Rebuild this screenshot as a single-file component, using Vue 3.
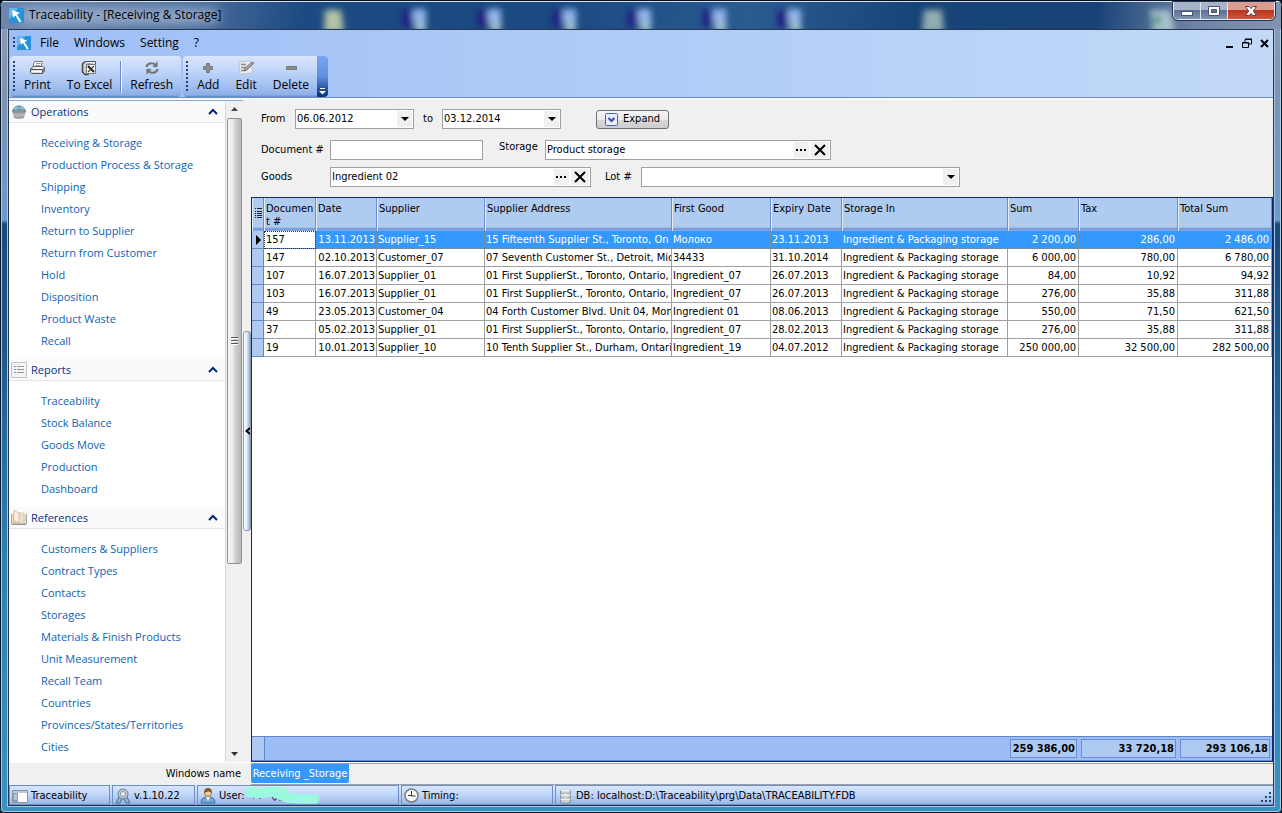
<script setup>
import { ref } from 'vue'

const menus = ['File', 'Windows', 'Setting', '?']

const sections = [
  {
    title: 'Operations',
    icon: 'basket',
    items: ['Receiving & Storage', 'Production Process & Storage', 'Shipping', 'Inventory', 'Return to Supplier', 'Return from Customer', 'Hold', 'Disposition', 'Product Waste', 'Recall'],
  },
  {
    title: 'Reports',
    icon: 'list',
    items: ['Traceability', 'Stock Balance', 'Goods Move', 'Production', 'Dashboard'],
  },
  {
    title: 'References',
    icon: 'book',
    items: ['Customers & Suppliers', 'Contract Types', 'Contacts', 'Storages', 'Materials & Finish Products', 'Unit Measurement', 'Recall Team', 'Countries', 'Provinces/States/Territories', 'Cities'],
  },
]

const headers = ['Documen t #', 'Date', 'Supplier', 'Supplier Address', 'First Good', 'Expiry Date', 'Storage In', 'Sum', 'Tax', 'Total Sum']
const place = 'Ingredient & Packaging storage'
const rows = [
  ['157', '13.11.2013', 'Supplier_15', '15 Fifteenth Supplier St., Toronto, On', 'Молоко', '23.11.2013', place, '2 200,00', '286,00', '2 486,00'],
  ['147', '02.10.2013', 'Customer_07', '07 Seventh Customer St., Detroit, Mic', '34433', '31.10.2014', place, '6 000,00', '780,00', '6 780,00'],
  ['107', '16.07.2013', 'Supplier_01', '01 First SupplierSt., Toronto, Ontario,', 'Ingredient_07', '26.07.2013', place, '84,00', '10,92', '94,92'],
  ['103', '16.07.2013', 'Supplier_01', '01 First SupplierSt., Toronto, Ontario,', 'Ingredient_07', '26.07.2013', place, '276,00', '35,88', '311,88'],
  ['49', '23.05.2013', 'Customer_04', '04 Forth Customer Blvd. Unit 04, Mon', 'Ingredient 01', '08.06.2013', place, '550,00', '71,50', '621,50'],
  ['37', '05.02.2013', 'Supplier_01', '01 First SupplierSt., Toronto, Ontario,', 'Ingredient_07', '28.02.2013', place, '276,00', '35,88', '311,88'],
  ['19', '10.01.2013', 'Supplier_10', '10 Tenth Supplier St., Durham, Ontari', 'Ingredient_19', '04.07.2012', place, '250 000,00', '32 500,00', '282 500,00'],
]

const from = ref('06.06.2012')
const to = ref('03.12.2014')
const doc = ref('')
const storage = ref('Product storage')
const goods = ref('Ingredient 02')
const lot = ref('')
</script>

<template>
  <div class="window">
    <header class="titlebar">
      <svg class="desktop" width="1282" height="28" aria-hidden="true">
        <defs>
          <filter id="soft" x="-50%" y="-50%" width="200%" height="200%"><feGaussianBlur stdDeviation="3" /></filter>
          <filter id="glow" x="-20%" y="-80%" width="140%" height="260%"><feGaussianBlur stdDeviation="6" /></filter>
        </defs>
        <rect x="20" y="8" width="200" height="14" rx="7" fill="#c3d2e4" opacity=".62" filter="url(#glow)" />
        <g filter="url(#soft)">
          <path d="M325 9h16l3 22h-20z" fill="#b4c3a6" />
          <g v-for="x in [402, 477, 552, 627, 702, 777]" :key="x">
            <rect :x="x" y="9" width="11" height="17" fill="#202284" />
            <rect :x="x + 11" y="8" width="13" height="13" fill="#92b4ec" />
            <rect :x="x + 13" y="20" width="11" height="11" fill="#9fbfd0" />
          </g>
          <path d="M924 9h18l2 22h-22z" fill="#93adb0" />
          <path d="M1150 9h20l5 22h-22z" fill="#a9c3cf" />
          <circle cx="1157" cy="19" r="5" fill="#5d9d8b" />
        </g>
      </svg>
      <svg class="app-icon" width="15" height="15" viewBox="0 0 15 15" aria-hidden="true">
        <rect width="15" height="15" fill="#2492dc" /><path d="M0 0h9L0 12z" fill="#7cc8f4" opacity=".7" />
        <path d="M3 2l8 3-3 1.500 4.500 7-2 1-4-7L4 9.500z" fill="#fff" />
      </svg>
      <h1>Traceability - [Receiving &amp; Storage]</h1>
      <div class="caption">
        <button type="button" aria-label="Minimize"><svg width="14" height="14"><rect x="1.500" y="7.500" width="11" height="4" fill="#fff" stroke="#4b5470" /></svg></button>
        <button type="button" aria-label="Maximize"><svg width="14" height="14"><path d="M1.500 2.500h11v9h-11z" fill="#fff" stroke="#4b5470" /><path d="M4.500 5.500h5v3h-5z" fill="#63749a" stroke="#4b5470" /></svg></button>
        <button type="button" class="close" aria-label="Close"><svg width="14" height="14"><path d="M1.500 2.500h3.500L7 4.500l2-2h3.500L9.300 7l3.200 4.500H9l-2-2-2 2H1.500L4.700 7z" fill="#fff" stroke="#5c4048" /></svg></button>
      </div>
    </header>

    <div class="client">
      <div class="menubar">
        <i class="grip short"></i>
        <svg width="14" height="14" viewBox="0 0 15 15" aria-hidden="true">
          <rect width="15" height="15" fill="#2492dc" /><path d="M0 0h9L0 12z" fill="#7cc8f4" opacity=".7" />
          <path d="M3 2l8 3-3 1.500 4.500 7-2 1-4-7L4 9.500z" fill="#fff" />
        </svg>
        <nav><button v-for="m in menus" :key="m" type="button">{{ m }}</button></nav>
        <div class="mdi">
          <button type="button" aria-label="Minimize document"><svg width="9" height="9"><path d="M1 7h7v2H1z" /></svg></button>
          <button type="button" aria-label="Restore document"><svg width="10" height="10" fill="none" stroke="#000"><path d="M3 4V1.500h6.500V6H7M3 1h7M.500 4.500h6v5h-6zM0 5h7" /></svg></button>
          <button type="button" aria-label="Close document"><svg width="9" height="9" stroke="#000" stroke-width="2"><path d="M1 1l7 7M8 1L1 8" /></svg></button>
        </div>
      </div>

      <div class="toolbars">
        <div class="toolbar">
          <i class="grip"></i>
          <button type="button">
            <svg width="17" height="16" viewBox="0 0 17 16">
              <path d="M5.500 1.500h8l-2 6H3.500z" fill="#fff" stroke="#777" /><path d="M7 3.500h4.500M6.500 5.500h4.500" stroke="#999" />
              <path d="M1.500 9l2.500-2.500h10.500l1 1L13.500 10z" fill="#f2f2f2" stroke="#666" /><path d="M1.500 9.500h12v4H2.500l-1-1z" fill="#ddd" stroke="#555" /><path d="M13.500 9.500l2-2v3.500l-2 2.500z" fill="#888" stroke="#666" /><path d="M3 11.500h9" stroke="#fff" />
            </svg>Print</button>
          <button type="button">
            <svg width="17" height="16" viewBox="0 0 17 16">
              <path d="M4 1.500h10.500v10" fill="#f4f4f4" stroke="#555" /><path d="M4 1.500L1.500 4v8L4 14.500h3V4.500h6" fill="#d0d0d0" stroke="#444" stroke-width="1.500" /><path d="M5.500 4.500h9v9h-9z" fill="#fafafa" stroke="#777" /><path d="M7 6l6 6" stroke="#222" stroke-width="2.200" /><path d="M13 6l-6 6" stroke="#444" stroke-width="1.300" />
            </svg>To Excel</button>
          <i class="sep"></i>
          <button type="button">
            <svg width="16" height="16" viewBox="0 0 16 16" fill="none" stroke="#6f7276" stroke-width="2"><path d="M2.500 7C3 3.500 8 2 11 4.500M13.500 9C13 12.500 8 14 5 11.500" /><path d="M13.500 1v6h-5zM2.500 15V9h5z" fill="#6f7276" stroke="none" /></svg>Refresh</button>
        </div>
        <div class="toolbar">
          <i class="grip"></i>
          <button type="button"><svg width="16" height="16"><path d="M6.500 3.500h3v3h3v3h-3v3h-3v-3h-3v-3h3z" fill="#8d8d8d" stroke="#777" /></svg>Add</button>
          <button type="button">
            <svg width="16" height="16" viewBox="0 0 16 16"><path d="M1 2l11-1 2 2v10l-12 1z" fill="#ececec" stroke="#c5c5c5" /><path d="M3 4.500h5M3 7.500h4M3 10.500h3" stroke="#8a8a8a" stroke-width="1.500" /><path d="M6 11l1-3 7-6 2 1-7 7z" fill="#a4a4a4" stroke="#777" /></svg>Edit</button>
          <button type="button"><svg width="16" height="16"><path d="M3.500 6.500h10v3h-10z" fill="#8d8d8d" stroke="#777" /></svg>Delete</button>
        </div>
        <button type="button" class="more" aria-label="Toolbar options"><svg width="7" height="8"><path d="M1 1.500h5" stroke="#fff" /><path d="M0 4h7L3.500 7.500z" fill="#fff" /></svg></button>
      </div>

      <div class="body">
        <aside>
          <div class="nav">
            <section v-for="s in sections" :key="s.title">
              <h2>
                <svg v-if="s.icon === 'basket'" width="16" height="16" viewBox="0 0 16 16"><path d="M1.500 7h13l-1.500 7q-5 2-10 0z" fill="#a2a6aa" /><path d="M1 6q7-3 14 0v2.500H1z" fill="#8b9095" /><path d="M3 11h10" stroke="#c5c8cb" /><path d="M2 6q6-8 12 0M5 6l3-3 3 3" fill="none" stroke="#62a5c9" stroke-width="1.500" /></svg>
                <svg v-else-if="s.icon === 'list'" width="16" height="16"><path d="M.5.5h15v15H.5z" fill="#f4f4f4" stroke="#c4c4c4" /><path d="M6 4.500h7M6 7.500h7M6 10.500h7" stroke="#999" /><path d="M3 4.500h2M3 7.500h2M3 10.500h2" stroke="#55a2da" /></svg>
                <svg v-else width="16" height="16"><path d="M.5 4v10h15V4" fill="#e8dccb" stroke="#9aa6ac" /><path d="M2 3h6v10H2z" fill="#e3c39c" /><path d="M8 3h5v10H8z" fill="#f1e2cd" stroke="#dcc6a8" /><path d="M3 0l5 3.500V13L3 10.500z" fill="#fbf1e0" stroke="#dcc09a" /><path d="M1 14.500h14" stroke="#8296a2" /></svg>
                <span>{{ s.title }}</span>
                <svg width="10" height="7" fill="none" stroke="#00267f" stroke-width="2"><path d="M1 6l4-4 4 4" /></svg>
              </h2>
              <ul><li v-for="i in s.items" :key="i"><a href="#">{{ i }}</a></li></ul>
            </section>
          </div>
          <div class="scroll" aria-hidden="true">
            <svg width="17" height="17"><path d="M5 10l3.500-4 3.500 4z" fill="#444" /></svg>
            <div class="thumb"><i></i><i></i><i></i></div>
            <div class="rest"></div>
            <svg width="17" height="17"><path d="M5 7l3.500 4L12 7z" fill="#333" /></svg>
          </div>
        </aside>
        <div class="splitter"><button type="button" aria-label="Collapse panel"><svg width="5" height="8" fill="none" stroke="#000" stroke-width="2"><path d="M5 1L1.500 4 5 7" /></svg></button></div>

        <main>
          <form class="filters" @submit.prevent>
            <div class="line">
              <label for="from" class="w34">From</label>
              <div class="box date"><input id="from" v-model="from" type="text"><button type="button" aria-label="Pick start date"><svg width="8" height="4"><path d="M0 0h8L4 4z" /></svg></button></div>
              <label for="to" class="w29">to</label>
              <div class="box date"><input id="to" v-model="to" type="text"><button type="button" aria-label="Pick end date"><svg width="8" height="4"><path d="M0 0h8L4 4z" /></svg></button></div>
              <button type="button" class="expand"><svg width="13" height="13" fill="none"><rect x=".5" y=".5" width="12" height="12" rx="1" fill="#e5edff" stroke="#4a64b4" /><path d="M3.500 5l3 3 3-3" stroke="#3450a8" stroke-width="2" /></svg>Expand</button>
            </div>
            <div class="line">
              <label for="doc" class="w69">Document #</label>
              <div class="box doc"><input id="doc" v-model="doc" type="text"></div>
              <label for="storage" class="w62 up">Storage</label>
              <div class="box store"><input id="storage" v-model="storage" type="text"><button type="button" aria-label="Choose storage"><svg width="11" height="3"><path d="M0 0h2v2H0zM4 0h2v2H4zM8 0h2v2H8z" /></svg></button><button type="button" class="x" aria-label="Clear storage"><svg width="12" height="12" stroke="#000" stroke-width="2"><path d="M1 1l10 10M11 1L1 11" /></svg></button></div>
            </div>
            <div class="line">
              <label for="goods" class="w69">Goods</label>
              <div class="box goods"><input id="goods" v-model="goods" type="text"><button type="button" aria-label="Choose goods"><svg width="11" height="3"><path d="M0 0h2v2H0zM4 0h2v2H4zM8 0h2v2H8z" /></svg></button><button type="button" class="x" aria-label="Clear goods"><svg width="12" height="12" stroke="#000" stroke-width="2"><path d="M1 1l10 10M11 1L1 11" /></svg></button></div>
              <label for="lot" class="w50">Lot #</label>
              <div class="box lot"><select id="lot" v-model="lot"><option value=""></option></select><span class="drop"><svg width="8" height="4"><path d="M0 0h8L4 4z" /></svg></span></div>
            </div>
          </form>

          <div class="grid">
            <table>
              <colgroup><col class="c0"><col class="c1"><col class="c2"><col class="c3"><col><col class="c5"><col class="c6"><col class="c7"><col class="c8"><col class="c9"><col class="c10"></colgroup>
              <thead>
                <tr>
                  <th class="ind"><svg width="7" height="11" stroke="#222"><path d="M0 .5h1M2 .5h5M0 3.500h1M2 3.500h5M0 5.500h1M2 5.500h5M0 7.500h1M2 7.500h5M0 9.500h1M2 9.500h5" /></svg></th>
                  <th v-for="h in headers" :key="h">{{ h }}</th>
                </tr>
              </thead>
              <tbody>
                <tr v-for="(r, n) in rows" :key="r[0]" :class="{ selected: n === 0 }">
                  <td class="ind"><svg v-if="n === 0" width="6" height="10"><path d="M0 0l5 5-5 5z" /></svg></td>
                  <td v-for="(c, k) in r" :key="k" :class="{ num: k > 6, date: k === 1 }">{{ c }}</td>
                </tr>
              </tbody>
            </table>
            <div class="totals">
              <i></i><span class="t8">259 386,00</span><span class="t9">33 720,18</span><span class="t10">293 106,18</span>
            </div>
          </div>
        </main>
      </div>

      <div class="tabs">
        <span class="name">Windows name</span>
        <div class="strip"><button type="button">Receiving _Storage</button></div>
      </div>

      <footer>
        <div class="panel s1"><svg width="16" height="14"><path d="M.5 1.500h15v12H.5z" fill="#fff" stroke="#8594a8" /><path d="M1 2h14v2H1z" fill="#bcc9da" /><path d="M1 4h5v9H1z" fill="#8b9bb0" /><path d="M2 6h3M2 8h3M2 10h3" stroke="#e8eef6" /></svg>Traceability</div>
        <div class="panel s2"><svg width="16" height="16"><path d="M4 9l-3 6h4l2-4zM12 9l3 6h-4l-2-4z" fill="#8fb6e0" stroke="#4a6c94" /><circle cx="8" cy="6" r="5" fill="#c6ced6" stroke="#667a90" /><circle cx="8" cy="6" r="2.500" fill="#eef2f6" stroke="#7f90a4" /></svg>v.1.10.22</div>
        <div class="panel s3">
          <svg width="16" height="16"><path d="M1 15q0-5 5-6h4q5 1 5 6z" fill="#6fa8dc" stroke="#376894" /><path d="M6 9h4l-2 4z" fill="#fff" /><circle cx="8" cy="5" r="3.500" fill="#f0c8a0" stroke="#a87444" /><path d="M4 5q0-5 4-5t4 5q-3-3-8 0z" fill="#8a5628" /></svg>User:
          <svg class="mark" width="76" height="17" aria-hidden="true"><path d="M8 11h1M14 11h2M27 10l2 3h2v-2M34 13h3" stroke="#234" fill="none" /><path d="M5 5q10 2 18 0t16 1" fill="none" stroke="#9bfade" stroke-width="10" stroke-linecap="round" /><path d="M28 5l14 6 12 1h16" fill="none" stroke="#9bfade" stroke-width="9" stroke-linecap="round" stroke-linejoin="round" /></svg>
        </div>
        <div class="panel s4"><svg width="15" height="15"><circle cx="7.500" cy="7.500" r="6.500" fill="#f6f6f4" stroke="#7a7d82" stroke-width="1.500" /><path d="M7.500 3v5h4M4 7.500h3" fill="none" stroke="#333" /></svg>Timing:</div>
        <div class="panel s5">
          <svg width="15" height="16"><g stroke="#7f8d95" fill="#c9d1d6"><path d="M2.500 2.500v3q5 2 10 0v-3zM2.500 7v3q5 2 10 0V7zM2.500 11.500v3q5 2 10 0v-3z" /></g><g fill="#f2f5f6" stroke="#a6b1b8" stroke-width=".5"><ellipse cx="7.500" cy="2.500" rx="5" ry="1.500" /><ellipse cx="7.500" cy="7" rx="5" ry="1.300" /><ellipse cx="7.500" cy="11.500" rx="5" ry="1.300" /></g></svg>DB: localhost:D:\Traceability\prg\Data\TRACEABILITY.FDB
          <svg class="size" width="12" height="12" fill="#1f3f7d"><path d="M8 0h2v2H8zM4 4h2v2H4zM8 4h2v2H8zM0 8h2v2H0zM4 8h2v2H4zM8 8h2v2H8z" /></svg>
        </div>
      </footer>
    </div>
  </div>
</template>

<style>
body { background: #04101f; }
</style>

<style scoped>
* { box-sizing: border-box; }
button, input, select { font: inherit; color: inherit; margin: 0; padding: 0; border: 0; background: none; }
svg { flex: none; display: block; }
ul { list-style: none; margin: 0; padding: 0; }

.window {
  display: flex; flex-direction: column; height: 100vh; position: relative; overflow: hidden;
  padding: 0 8px 7px; border-radius: 7px 7px 5px 5px;
  background: linear-gradient(#8c9cb5, #7d93b4 100px, #6b9bca 220px, #1b4a7c 224px, #1d568a 330px, #2d80b4 560px, #3a92c4);
  box-shadow: inset 0 0 0 1px #0a1728, inset 0 0 0 2px #a9c9e4;
  color: #000; font: 11px/14px "DejaVu Sans Condensed", "Noto Sans", sans-serif;
}
.titlebar {
  display: flex; align-items: center; gap: 5px; height: 29px; flex: none; margin: 0 -7px; padding-left: 8px; position: relative;
  border-top: 1px solid #06101f; box-shadow: inset 0 1px #d5e2ef;
  background: linear-gradient(100deg, #6c86ae 0, #53729f 180px, #1c4a81 300px, #1b4a80 560px, #2a5c90 740px, #184578 900px, #184275 1080px, #6f84a6 1180px, #8294b0 100%);
}
.desktop { position: absolute; left: -1px; top: 0; }
.app-icon, h1 { position: relative; }
h1 { margin: 0; font: 12px/16px "Open Sans", "Noto Sans", sans-serif; flex: 1; }
.caption { position: relative; display: flex; align-self: flex-start; margin: 1px 6px 0 0; border: 1px solid #e2eaf4; border-top: 0; border-radius: 0 0 5px 5px; overflow: hidden; outline: 1px solid #22344f; }
.caption button { width: 27px; height: 17px; display: flex; justify-content: center; align-items: center; border-right: 1px solid #dbe3ee; background: linear-gradient(#a7b3c8 0 45%, #5d7195 50%, #8093b1); }
.caption button.close { width: 46px; border: 0; background: linear-gradient(#dc9d90 0 45%, #b93522 50%, #d4533a); }

.client { flex: 1; min-height: 0; display: flex; flex-direction: column; background: linear-gradient(90deg, #9ebef6, #b0ccf7 50%, #c2d9f8); border: 1px solid #26364c; box-shadow: 0 0 0 1px #a9c4de; }
.menubar { height: 26px; flex: none; display: flex; align-items: center; padding: 0 4px; gap: 2px; font: 12px/16px "Open Sans", "Noto Sans", sans-serif; }
.menubar nav { display: flex; flex: 1; gap: 15px; padding-left: 7px; }
.mdi { display: flex; gap: 8px; align-items: center; }
.grip { width: 2px; height: 32px; flex: none; background: repeating-linear-gradient(#21417d 0 2px, transparent 2px 4px); }
.grip.short { height: 12px; }
.toolbars { height: 42px; flex: none; display: flex; padding-left: 1px; border-bottom: 1px solid #6d8dbd; font: 12px/16px "Open Sans", "Noto Sans", sans-serif; }
.toolbar { display: flex; align-items: center; height: 41px; padding-left: 3px; border-radius: 4px; background: linear-gradient(#d9e6fc, #bdd3f8 40%, #a6c1f0 70%, #8dafe6 95%, #5f83c4); }
.toolbar .grip { margin-right: 1px; }
.toolbar + .toolbar { margin-left: 2px; border-radius: 4px 0 0 4px; }
.toolbar button { display: flex; flex-direction: column; align-items: center; gap: 1px; padding: 0 8px; }
.toolbar .sep { width: 2px; height: 32px; background: linear-gradient(90deg, #6a8ccb 50%, #eef4fe 50%); }
.more { width: 11px; height: 41px; display: flex; align-items: flex-end; justify-content: center; padding-bottom: 2px; border-radius: 0 4px 4px 0; background: linear-gradient(#79a5f1, #5f8fe0 50%, #0b3484 95%); }

.body { flex: 1; min-height: 0; display: flex; background: #f0f0f0; border-top: 2px solid #f4f8fe; }
aside { width: 234px; flex: none; display: flex; border-top: 1px solid #8fabc6; }
.nav { flex: 1; min-width: 0; overflow: hidden; background: #fff; border-right: 1px solid #cddbe3; }
h2 { display: flex; align-items: center; gap: 4px; margin: 0; height: 22px; padding: 0 7px 0 2px; border-bottom: 1px solid #e1e5e8; background: #fafafa; color: #073088; font: 11px/16px "Open Sans", "Noto Sans", sans-serif; }
h2 span { flex: 1; }
.nav ul { padding: 9px 0 7px 32px; }
.nav li { height: 22px; font: 11px/22px "Open Sans", "Noto Sans", sans-serif; }
.nav a { color: #0d62b5; text-decoration: none; }
.scroll { width: 17px; display: flex; flex-direction: column; background: #f0f0f0; }
.thumb { flex: 446 0 0; margin: 0 1px; display: flex; flex-direction: column; gap: 1px; align-items: center; justify-content: center; border: 1px solid #919191; border-radius: 2px; background: linear-gradient(90deg, #f6f6f6, #e6e6e6 45%, #cfcfcf 55%, #b9b9b9); }
.thumb i { width: 7px; height: 2px; background: #555; border-bottom: 1px solid #fff; }
.rest { flex: 182 0 0; }
.splitter { width: 8px; flex: none; display: flex; flex-direction: column; justify-content: center; }
.splitter button { height: 200px; border: 1px solid #8e98a6; border-radius: 3px; background: linear-gradient(90deg, #fff, #dce9f8 50%, #87a9dd); display: flex; align-items: center; justify-content: flex-end; }

main { flex: 1; min-width: 0; display: flex; flex-direction: column; }
.filters { padding: 9px 10px 10px; display: flex; flex-direction: column; gap: 7px; }
.line { display: flex; height: 20px; align-items: center; }
.line:first-child { margin-bottom: 4px; }
.box { height: 20px; display: flex; align-items: center; border: 1px solid #a0a0a0; background: #fff; padding: 1px; }
.box input { flex: 1; min-width: 0; width: 0; outline: 0; }
.box button, .drop { width: 15px; height: 16px; flex: none; display: flex; align-items: center; justify-content: center; background: #f0f0f0; }
.box .x { width: 18px; margin-left: 2px; }
.w34 { width: 34px; } .w29 { width: 28px; padding-left: 9px; } .w69 { width: 69px; } .w62 { width: 62px; padding-left: 16px; } .w50 { width: 50px; padding-left: 14px; }
.up { align-self: flex-start; }
.date.box { width: 119px; } .doc { width: 153px; } .store { width: 286px; } .goods { width: 261px; }
.lot { width: 319px; }
.lot select { flex: 1; appearance: none; outline: 0; }
.expand { margin-left: 35px; width: 73px; height: 19px; display: flex; align-items: center; justify-content: center; gap: 5px; border: 1px solid #707070; border-radius: 3px; background: linear-gradient(#f4f4f4, #ebebeb 50%, #d8d8d8 52%, #cdcdcd); }

.grid { flex: 1; min-height: 0; display: flex; flex-direction: column; justify-content: space-between; background: #fff; border: 1px solid #0d2c6e; }
table { width: 100%; table-layout: fixed; border-collapse: separate; border-spacing: 0; }
.c0 { width: 12px; } .c1 { width: 52px; } .c2 { width: 61px; } .c3 { width: 108px; } .c5 { width: 99px; } .c6 { width: 71px; } .c7 { width: 166px; } .c8 { width: 71px; } .c9 { width: 99px; } .c10 { width: 94px; }
th { height: 33px; padding: 4px 1px 0 2px; text-align: left; vertical-align: top; font-weight: 400; line-height: 13px; overflow: hidden; background: linear-gradient(#b0cbf0 0 29px, #6d94d8 31px, #8fb0e4); border-right: 1px solid #6a8ed0; box-shadow: inset 1px 0 #e3eefc; }
th.ind { padding: 10px 0 0 3px; }
td { height: 18px; padding: 0 1px; line-height: 17px; white-space: nowrap; overflow: hidden; border-right: 1px solid #a0a0a0; border-bottom: 1px solid #a0a0a0; }
td.num { text-align: right; padding-right: 2px; } td.date { text-align: right; }
td.ind { background: #aecaf0; border-color: #6288cc; padding: 0 0 0 4px; }
td:nth-child(2) { padding-left: 2px; }
.selected td { background: #3399ff; color: #fff; border-color: #6f8ca8; }
.selected td.ind { background: #aecaf0; }
.selected td:nth-child(2) { background: #fff; color: #000; outline: 1px dotted #333; outline-offset: -1px; }
.totals { height: 25px; flex: none; display: flex; align-items: center; background: #9fbdf5; border-top: 1px solid #5f86cc; border-bottom: 1px solid #5f86cc; padding-right: 2px; gap: 4px; font-weight: 700; }
.totals i { width: 13px; height: 100%; margin-right: auto; background: #aecaf0; border-right: 1px solid #5f86cc; }
.totals span { height: 19px; line-height: 18px; text-align: right; padding-right: 1px; background: #aecaf0; border: 1px solid #6a8ed0; }
.t8 { width: 67px; } .t9 { width: 95px; } .t10 { width: 90px; }

.tabs { height: 23px; flex: none; display: flex; background: #f0f0f0; border-top: 1px solid #fff; }
.name { width: 242px; text-align: right; padding: 4px 10px 0 0; }
.strip { flex: 1; border-top: 1px solid #a0a0a0; border-bottom: 1px solid #a0a0a0; }
.strip button { height: 19px; width: 98px; background: #3399ff; color: #fff; border-radius: 0 0 2px 2px; }
footer { height: 20px; flex: none; display: flex; gap: 2px; background: linear-gradient(#d9e7fc, #c0d6f9 50%, #93b3e8); }
.panel { display: flex; align-items: center; gap: 3px; padding: 1px 0 0 2px; border: 1px solid #6d8fc6; }
.s1 { width: 101px; } .s2 { width: 83px; } .s3 { width: 202px; } .s4 { width: 152px; } .s5 { flex: 1; border-right: 0; }
.mark { margin-left: -3px; }
.size { margin: 4px 0 0 auto; }
</style>
